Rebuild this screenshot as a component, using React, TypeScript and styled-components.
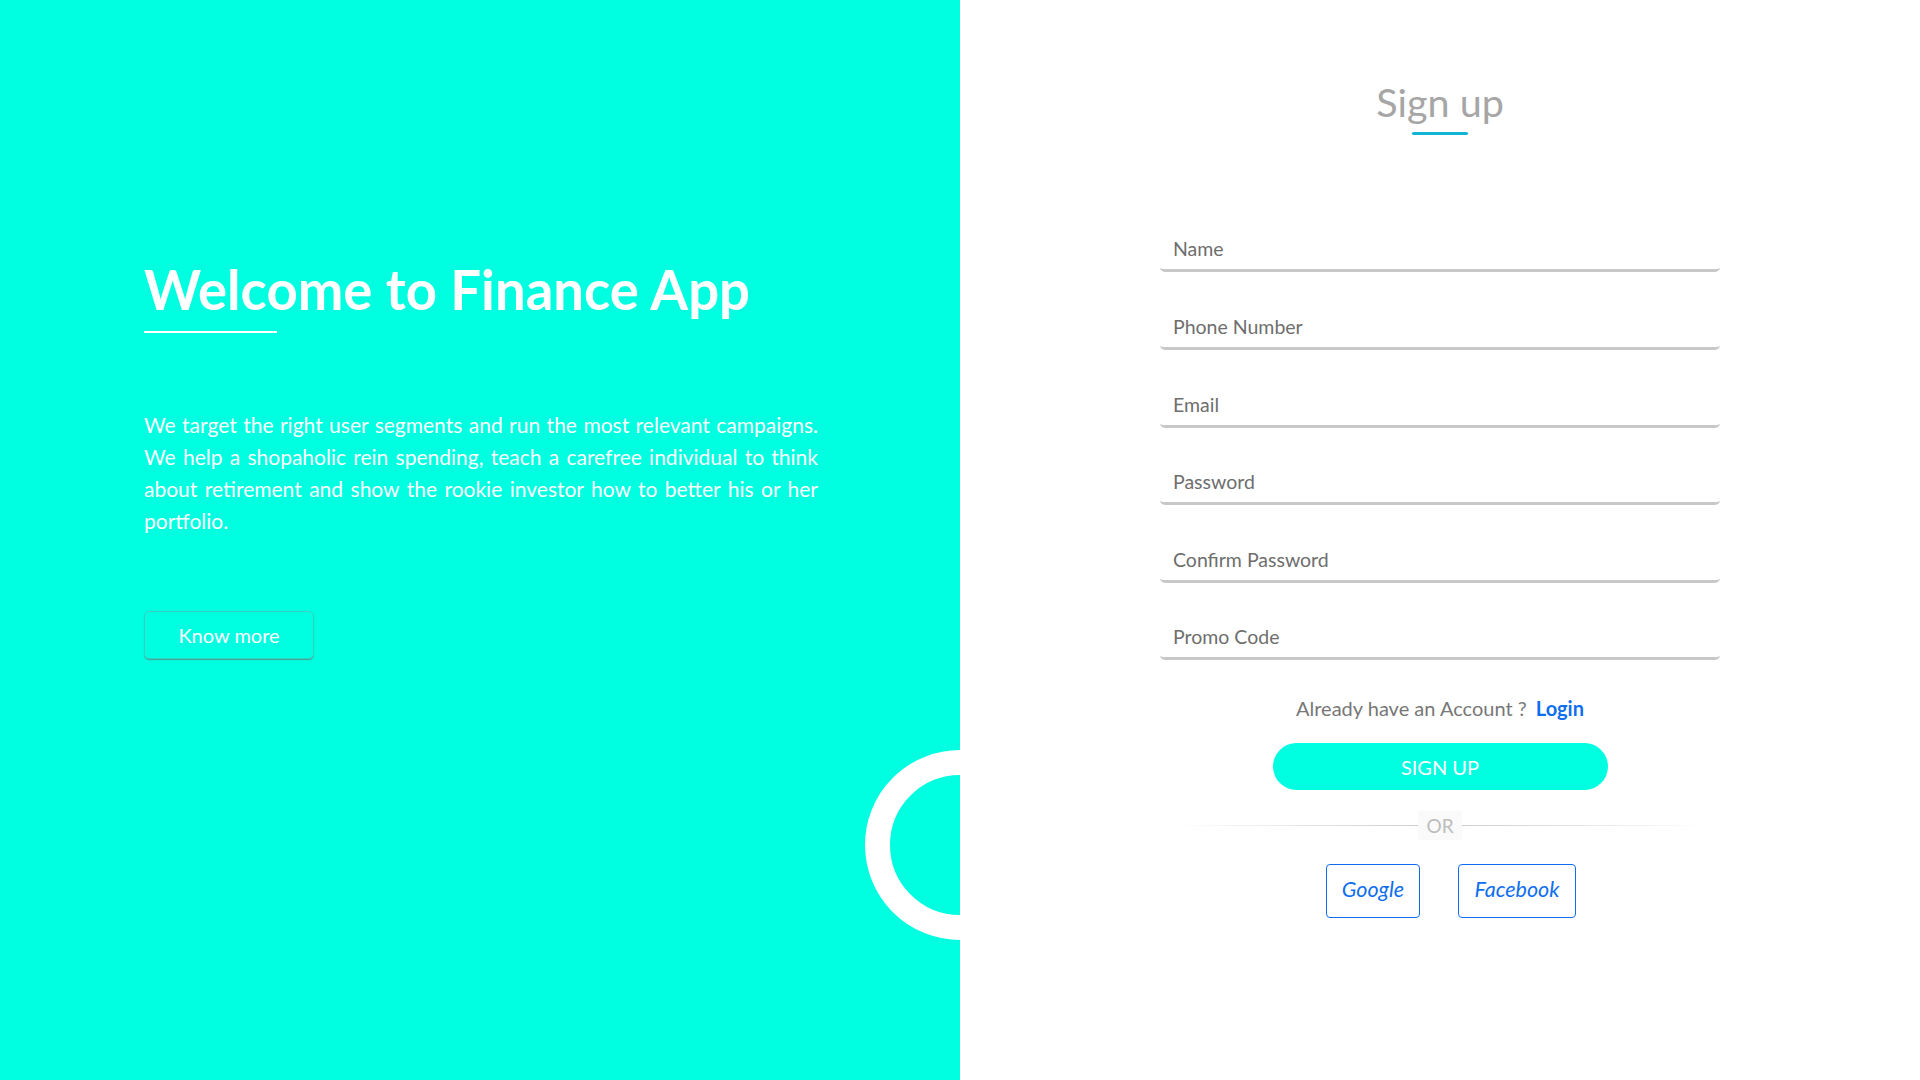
import styled, { createGlobalStyle } from 'styled-components'

const CYAN = '#00ffe1'

const GlobalStyle = createGlobalStyle`
  * {
    box-sizing: border-box;
  }
  body {
    margin: 0;
    font-family: Lato, 'Open Sans', sans-serif;
    background: #fff;
  }
`

const fields = ['Name', 'Phone Number', 'Email', 'Password', 'Confirm Password', 'Promo Code']

export default function App() {
  return (
    <Page>
      <GlobalStyle />
      <Hero>
        <HeroTitle>Welcome to Finance App</HeroTitle>
        <HeroLine />
        <HeroText>
          We target the right user segments and run the most relevant campaigns. We help a shopaholic rein
          spending, teach a carefree individual to think about retirement and show the rookie investor how to
          better his or her portfolio.
        </HeroText>
        <OutlineButton>Know more</OutlineButton>
        <Ring />
      </Hero>

      <FormSide>
        <FormTitle>Sign up</FormTitle>
        <TitleLine />
        <Fields>
          {fields.map((f) => (
            <Input key={f} placeholder={f} type={f.includes('Password') ? 'password' : 'text'} />
          ))}
        </Fields>
        <AccountText>
          Already have an Account ? <LoginLink href='#'>Login</LoginLink>
        </AccountText>
        <SubmitButton>SIGN UP</SubmitButton>
        <Divider>
          <DividerLabel>OR</DividerLabel>
        </Divider>
        <SocialRow>
          <SocialButton $width={94}>Google</SocialButton>
          <SocialButton $width={118}>Facebook</SocialButton>
        </SocialRow>
      </FormSide>
    </Page>
  )
}

const Page = styled.div`
  display: grid;
  grid-template-columns: 960px 960px;
  width: 1920px;
  height: 1080px;
  overflow: hidden;
`

const Hero = styled.section`
  position: relative;
  overflow: hidden;
  background: ${CYAN};
  padding: 257px 0 0 144px;
  display: flex;
  flex-direction: column;
  align-items: flex-start;
`

const HeroTitle = styled.h1`
  margin: 0;
  font-size: 54.5px;
  line-height: 1.2;
  font-weight: 700;
  color: #fff;
`

const HeroLine = styled.div`
  width: 133px;
  height: 2px;
  margin-top: 9px;
  background: #fff;
`

const HeroText = styled.p`
  width: 674px;
  margin: 76px 0 0;
  font-size: 21px;
  line-height: 32px;
  color: #fff;
  text-align: justify;
`

const OutlineButton = styled.button`
  margin-top: 74px;
  width: 170px;
  height: 48px;
  background: transparent;
  border: 1px solid rgba(120, 150, 150, 0.45);
  border-radius: 5px;
  box-shadow: 0 1px 1px rgba(140, 60, 60, 0.5);
  color: #fff;
  font-family: Lato, sans-serif;
  font-size: 20px;
`

const Ring = styled.div`
  position: absolute;
  top: 750px;
  right: -95px;
  width: 190px;
  height: 190px;
  border: 25px solid #fff;
  border-radius: 50%;
`

const FormSide = styled.section`
  display: flex;
  flex-direction: column;
  align-items: center;
  padding-top: 78px;
  background: #fff;
`

const FormTitle = styled.h2`
  margin: 0;
  font-size: 39.5px;
  line-height: 1.2;
  font-weight: 400;
  color: #a6a6a6;
`

const TitleLine = styled.div`
  width: 56px;
  height: 3px;
  margin-top: 7px;
  border-radius: 2px;
  background: #10b4d4;
`

const Fields = styled.div`
  display: flex;
  flex-direction: column;
  gap: 33.6px;
  width: 560px;
  margin-top: 93px;
`

const Input = styled.input`
  height: 44px;
  padding: 0 13px;
  border: none;
  border-bottom: 3px solid #c8c8c8;
  border-radius: 5px;
  outline: none;
  font-family: Lato, sans-serif;
  font-size: 19.5px;
  color: #555;

  &::placeholder {
    color: #6e6e6e;
  }
`

const AccountText = styled.p`
  margin: 37px 0 0;
  font-size: 20px;
  line-height: 23px;
  color: #777;
`

const LoginLink = styled.a`
  margin-left: 4px;
  font-weight: 700;
  color: #0f6ef0;
  text-decoration: none;
`

const SubmitButton = styled.button`
  margin-top: 23px;
  width: 335px;
  height: 47px;
  border: none;
  border-radius: 24px;
  background: ${CYAN};
  color: #fff;
  font-family: Lato, sans-serif;
  font-size: 20px;
`

const Divider = styled.div`
  margin-top: 20px;
  width: 535px;
  height: 30px;
  display: flex;
  align-items: center;
  justify-content: center;
  background: linear-gradient(to right, transparent, #cfcfcf 45%, #cfcfcf 55%, transparent) center / 100% 1px
    no-repeat;
`

const DividerLabel = styled.span`
  padding: 3px 8px;
  background: #fafafa;
  color: #bdbdbd;
  font-size: 19px;
  line-height: 23px;
`

const SocialRow = styled.div`
  display: flex;
  gap: 38px;
  margin: 24px 0 0 22px;
`

const SocialButton = styled.button<{ $width: number }>`
  width: ${(p) => p.$width}px;
  height: 54px;
  padding-bottom: 6px;
  background: #fff;
  border: 1px solid #0f6ef0;
  border-radius: 4px;
  color: #0f6ef0;
  font-family: Lato, sans-serif;
  font-style: italic;
  font-size: 21.5px;
`
